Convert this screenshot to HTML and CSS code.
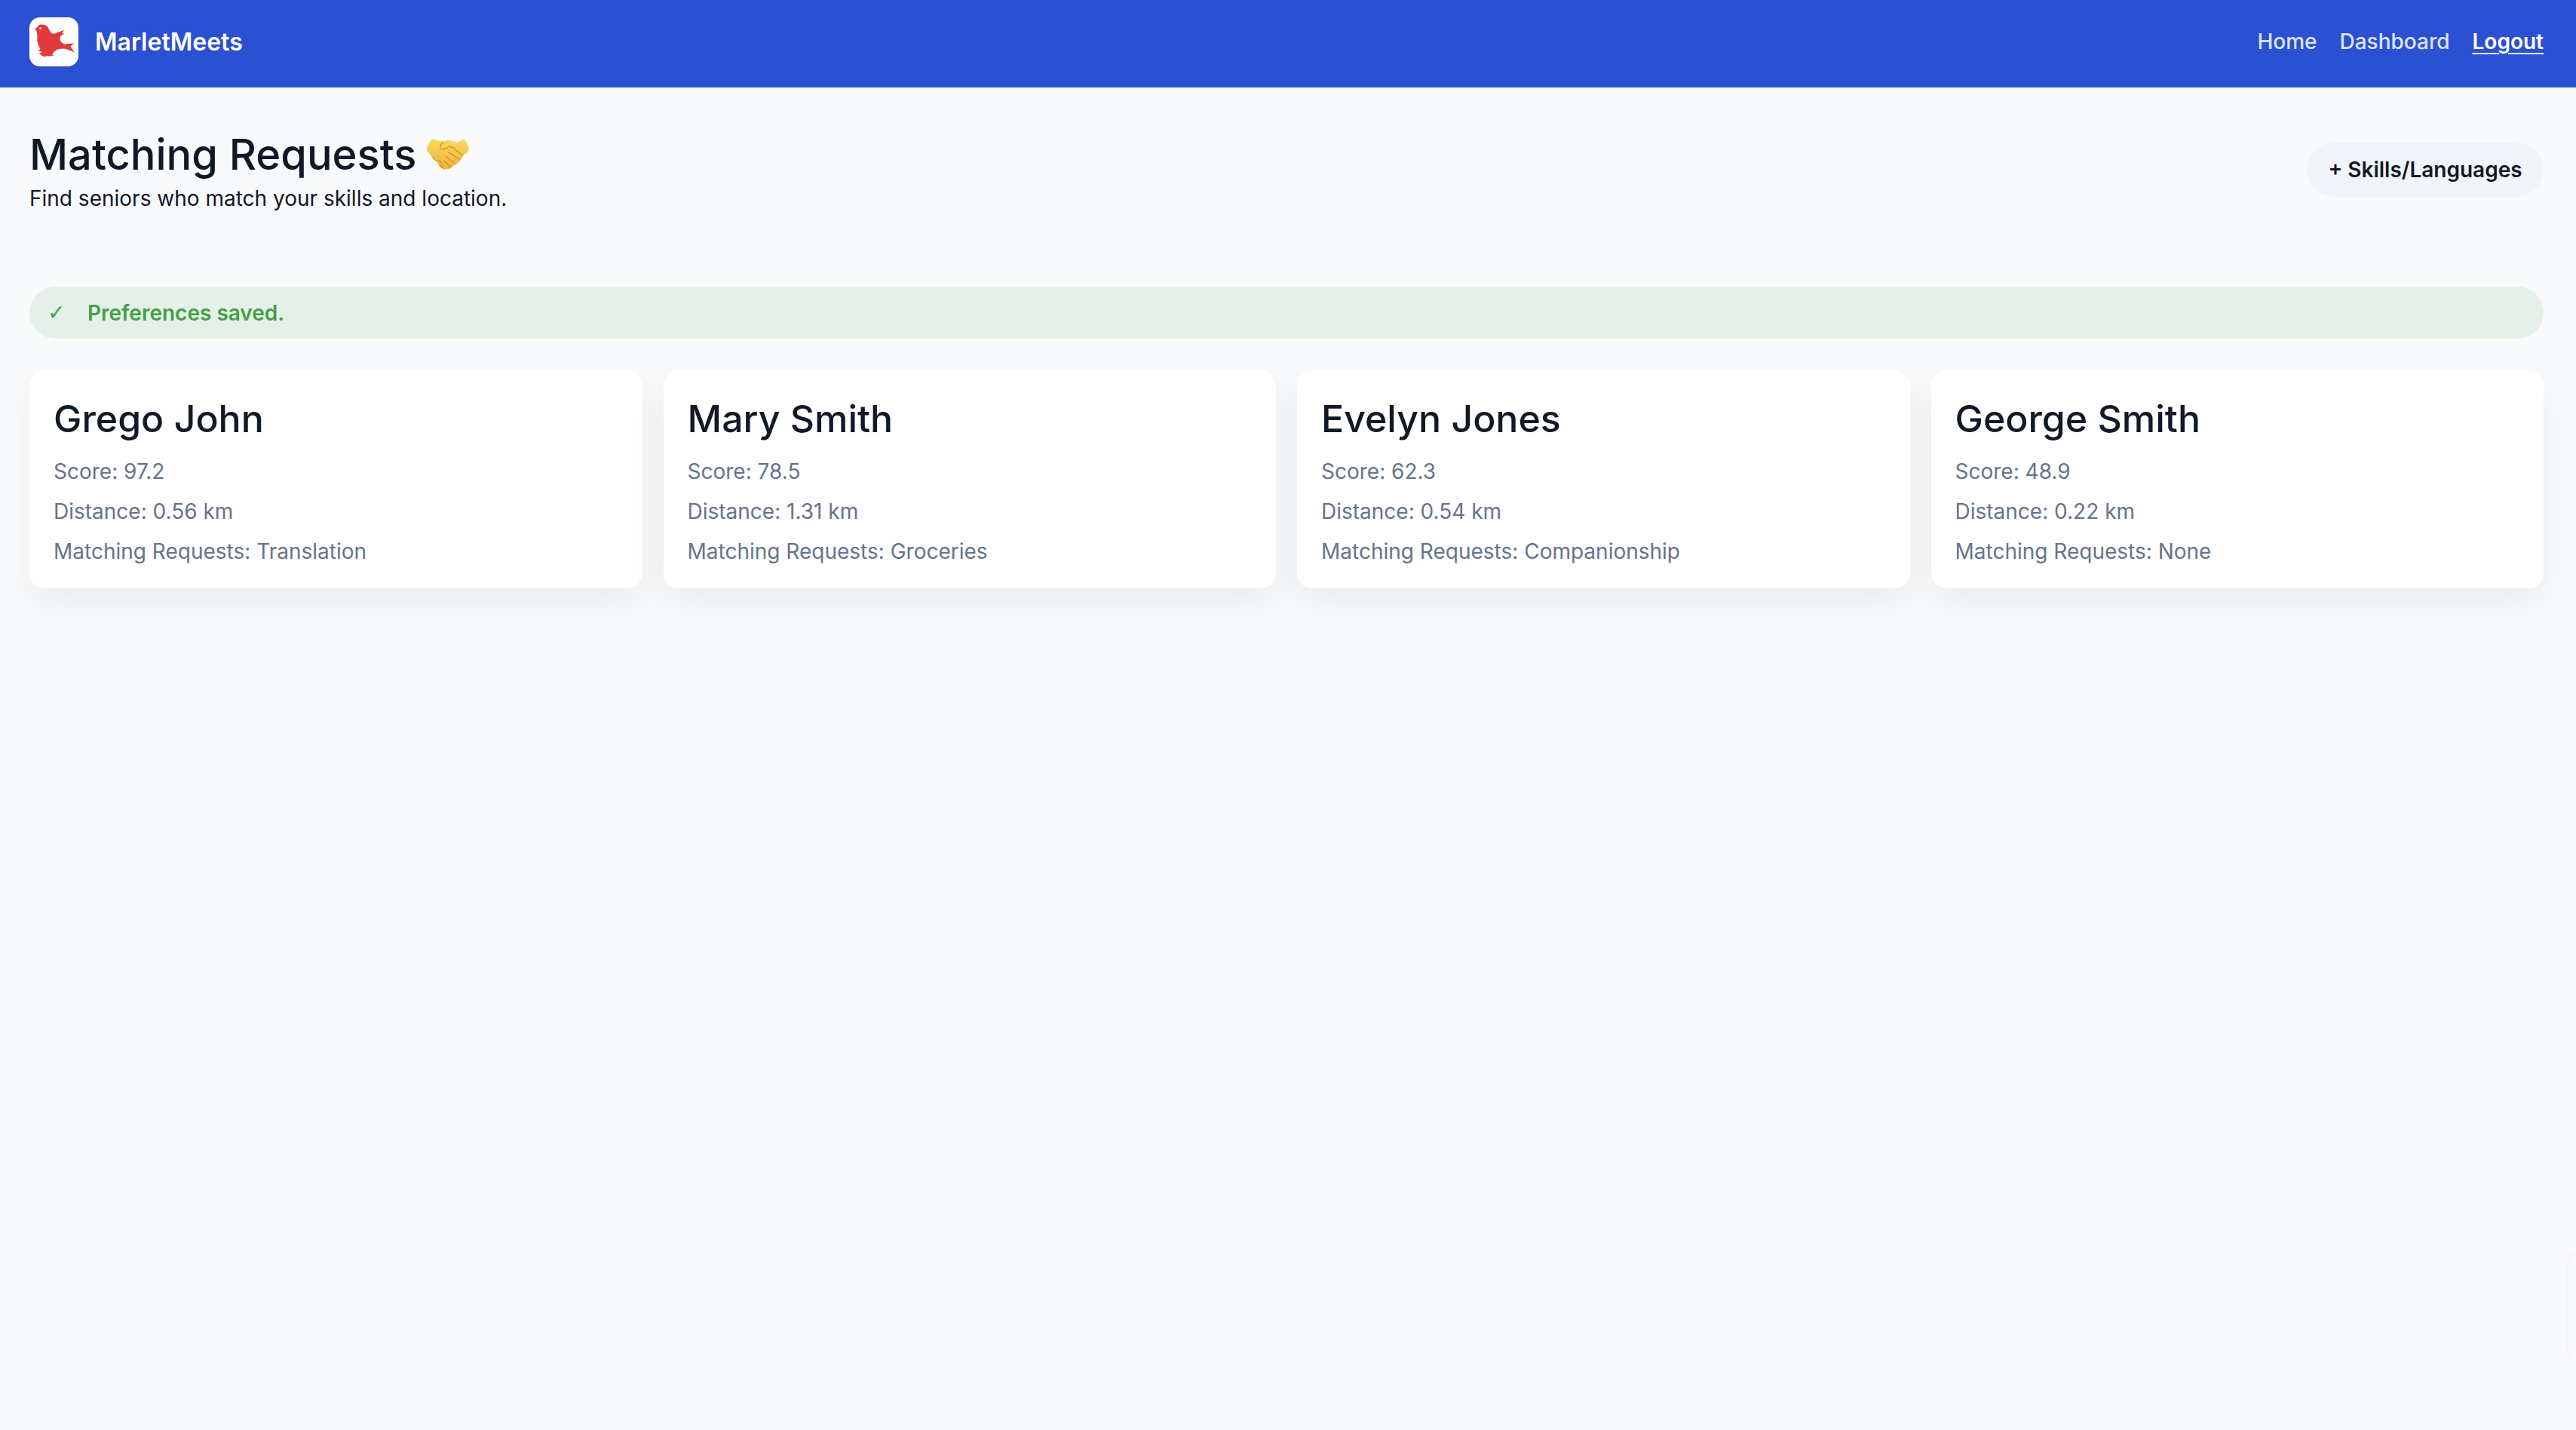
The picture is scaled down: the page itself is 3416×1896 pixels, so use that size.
FILE: index.html
```html
<!DOCTYPE html>
<html lang="en">
<head>
<meta charset="utf-8">
<title>MarletMeets</title>
<link rel="stylesheet" href="styles.css">
</head>
<body>
<nav class="nav">
  <a class="brand" href="#">
    <span class="logo">
      <svg viewBox="0 0 65 65" width="65" height="65"><path class="bird" d="M7 15.5 L10.5 13 Q12 9.5 16 9.500 Q22 9 24.500 13 Q26 17 29 20.500 Q32 23 36 20.500 L46 17 L43 21.500 L46.500 21.500 L41 25 L40.500 30 Q42 33.500 46 35.500 L59 34.500 L54.500 38.500 L60 47 Q52 42 45 41.500 Q40 41 36 43 L32 46.500 L30 50 L33 51 L22 51.500 L20 52.500 L16 50.500 L13 47.500 L17 46 L11.500 44 L14.500 42 Q9.500 34 10.500 27 Q10.500 21 9.500 18 Z"/><circle cx="14.500" cy="14.500" r="1.300" fill="#fff"/></svg>
    </span>
    <span class="brand-name">MarletMeets</span>
  </a>
  <div class="links">
    <a class="link" href="#">Home</a>
    <a class="link" href="#">Dashboard</a>
    <a class="link active" href="#">Logout</a>
  </div>
</nav>
<main class="main">
  <header class="head">
    <div>
      <h1 class="title">Matching Requests <svg class="shake" viewBox="0 0 60 50" width="60" height="50"><defs><linearGradient id="g" x1="0" y1="0" x2="0" y2="1"><stop offset="0" stop-color="#fbd85f"/><stop offset="1" stop-color="#eeb33c"/></linearGradient></defs><path fill="url(#g)" d="M9 4 L24 8 Q30 4 36 7 L42 9 L51 5 Q54 6 58 17 L56 22 L50 26 Q47 35 38 39 Q33 46 25 44 Q19 44 17 37 L14 33 L9 28 L2 20 Q2 12 9 4 Z"/><path fill="none" stroke="#c98a1e" stroke-opacity=".75" stroke-width="1.500" stroke-linecap="round" d="M24 8 Q19 12 20 17 Q24 20 31 14 L37 16 L49 26 M31 22 L45 31 M28 28 L39 37 M25 33 L33 41 M16 32 L22 36 M20 39 L25 44 M9 28 L14 33"/></svg></h1>
      <p class="sub">Find seniors who match your skills and location.</p>
    </div>
    <a class="pill" href="#">+ Skills/Languages</a>
  </header>
  <div class="alert"><span class="tick">✓</span><span>Preferences saved.</span></div>
  <section class="cards">
    <article class="card"><h2 class="name">Grego John</h2><p class="line">Score: 97.2</p><p class="line">Distance: 0.56 km</p><p class="line">Matching Requests: Translation</p></article>
    <article class="card"><h2 class="name">Mary Smith</h2><p class="line">Score: 78.5</p><p class="line">Distance: 1.31 km</p><p class="line">Matching Requests: Groceries</p></article>
    <article class="card"><h2 class="name">Evelyn Jones</h2><p class="line">Score: 62.3</p><p class="line">Distance: 0.54 km</p><p class="line">Matching Requests: Companionship</p></article>
    <article class="card"><h2 class="name">George Smith</h2><p class="line">Score: 48.9</p><p class="line">Distance: 0.22 km</p><p class="line">Matching Requests: None</p></article>
  </section>
</main>
<div class="edge"></div>
</body>
</html>
```
FILE: styles.css
```css
* { box-sizing: border-box; }
html, body { margin: 0; height: 100%; }
body {
  position: relative;
  background: #f9fafc;
  color: #111827;
  font-family: Inter, "Liberation Sans", sans-serif;
  overflow: hidden;
}
a { color: inherit; text-decoration: none; }
.nav {
  height: 116px;
  padding: 0 43px 6px 39px;
  background: #2c50d2;
  display: flex;
  align-items: center;
  justify-content: space-between;
}
.brand { display: flex; align-items: center; gap: 22px; }
.logo { width: 65px; height: 65px; border-radius: 14px; background: #fff; display: block; }
.logo svg { display: block; }
.bird { fill: #e03a3c; }
.brand-name { color: #fff; font-size: 32px; font-weight: 600; }
.links { display: flex; gap: 30px; }
.link { color: #dbe5fd; font-size: 28px; font-weight: 500; }
.active { color: #fff; font-weight: 600; text-decoration: underline; text-underline-offset: 5px; text-decoration-thickness: 2px; }
.main { padding: 44px 43px 0 39px; }
.head { display: flex; justify-content: space-between; align-items: center; height: 130px; margin-bottom: 90px; }
.title { margin: 0; font-size: 56px; line-height: 76px; font-weight: 500; display: flex; align-items: center; gap: 12px; }
.shake { display: block; }
.sub { margin: 0; font-size: 28px; line-height: 40px; }
.pill {
  height: 72px;
  width: 314px;
  border-radius: 36px;
  background: #f1f5f9;
  font-size: 28px;
  font-weight: 600;
  display: flex;
  align-items: center;
  justify-content: center;
}
.alert {
  height: 69px;
  border-radius: 35px;
  padding-left: 24px;
  background: #e5f0e8;
  color: #43a047;
  font-size: 28px;
  font-weight: 600;
  display: flex;
  align-items: center;
}
.tick { width: 53px; font-family: "DejaVu Sans", sans-serif; }
.cards { margin-top: 42px; display: grid; grid-template-columns: repeat(4, 1fr); gap: 28px; }
.card {
  height: 289px;
  border-radius: 20px;
  background: #fff;
  padding: 32px;
  box-shadow: 0 20px 50px rgba(15, 23, 42, 0.06);
}
.name { margin: 0 0 12px; font-size: 50px; line-height: 64px; font-weight: 500; }
.line { margin: 0; color: #64748b; font-size: 28px; line-height: 53px; }
.edge {
  position: absolute;
  left: 3404px;
  top: 1658px;
  width: 40px;
  height: 152px;
  border: 2px solid #f3f5f8;
  border-radius: 24px;
}
```
